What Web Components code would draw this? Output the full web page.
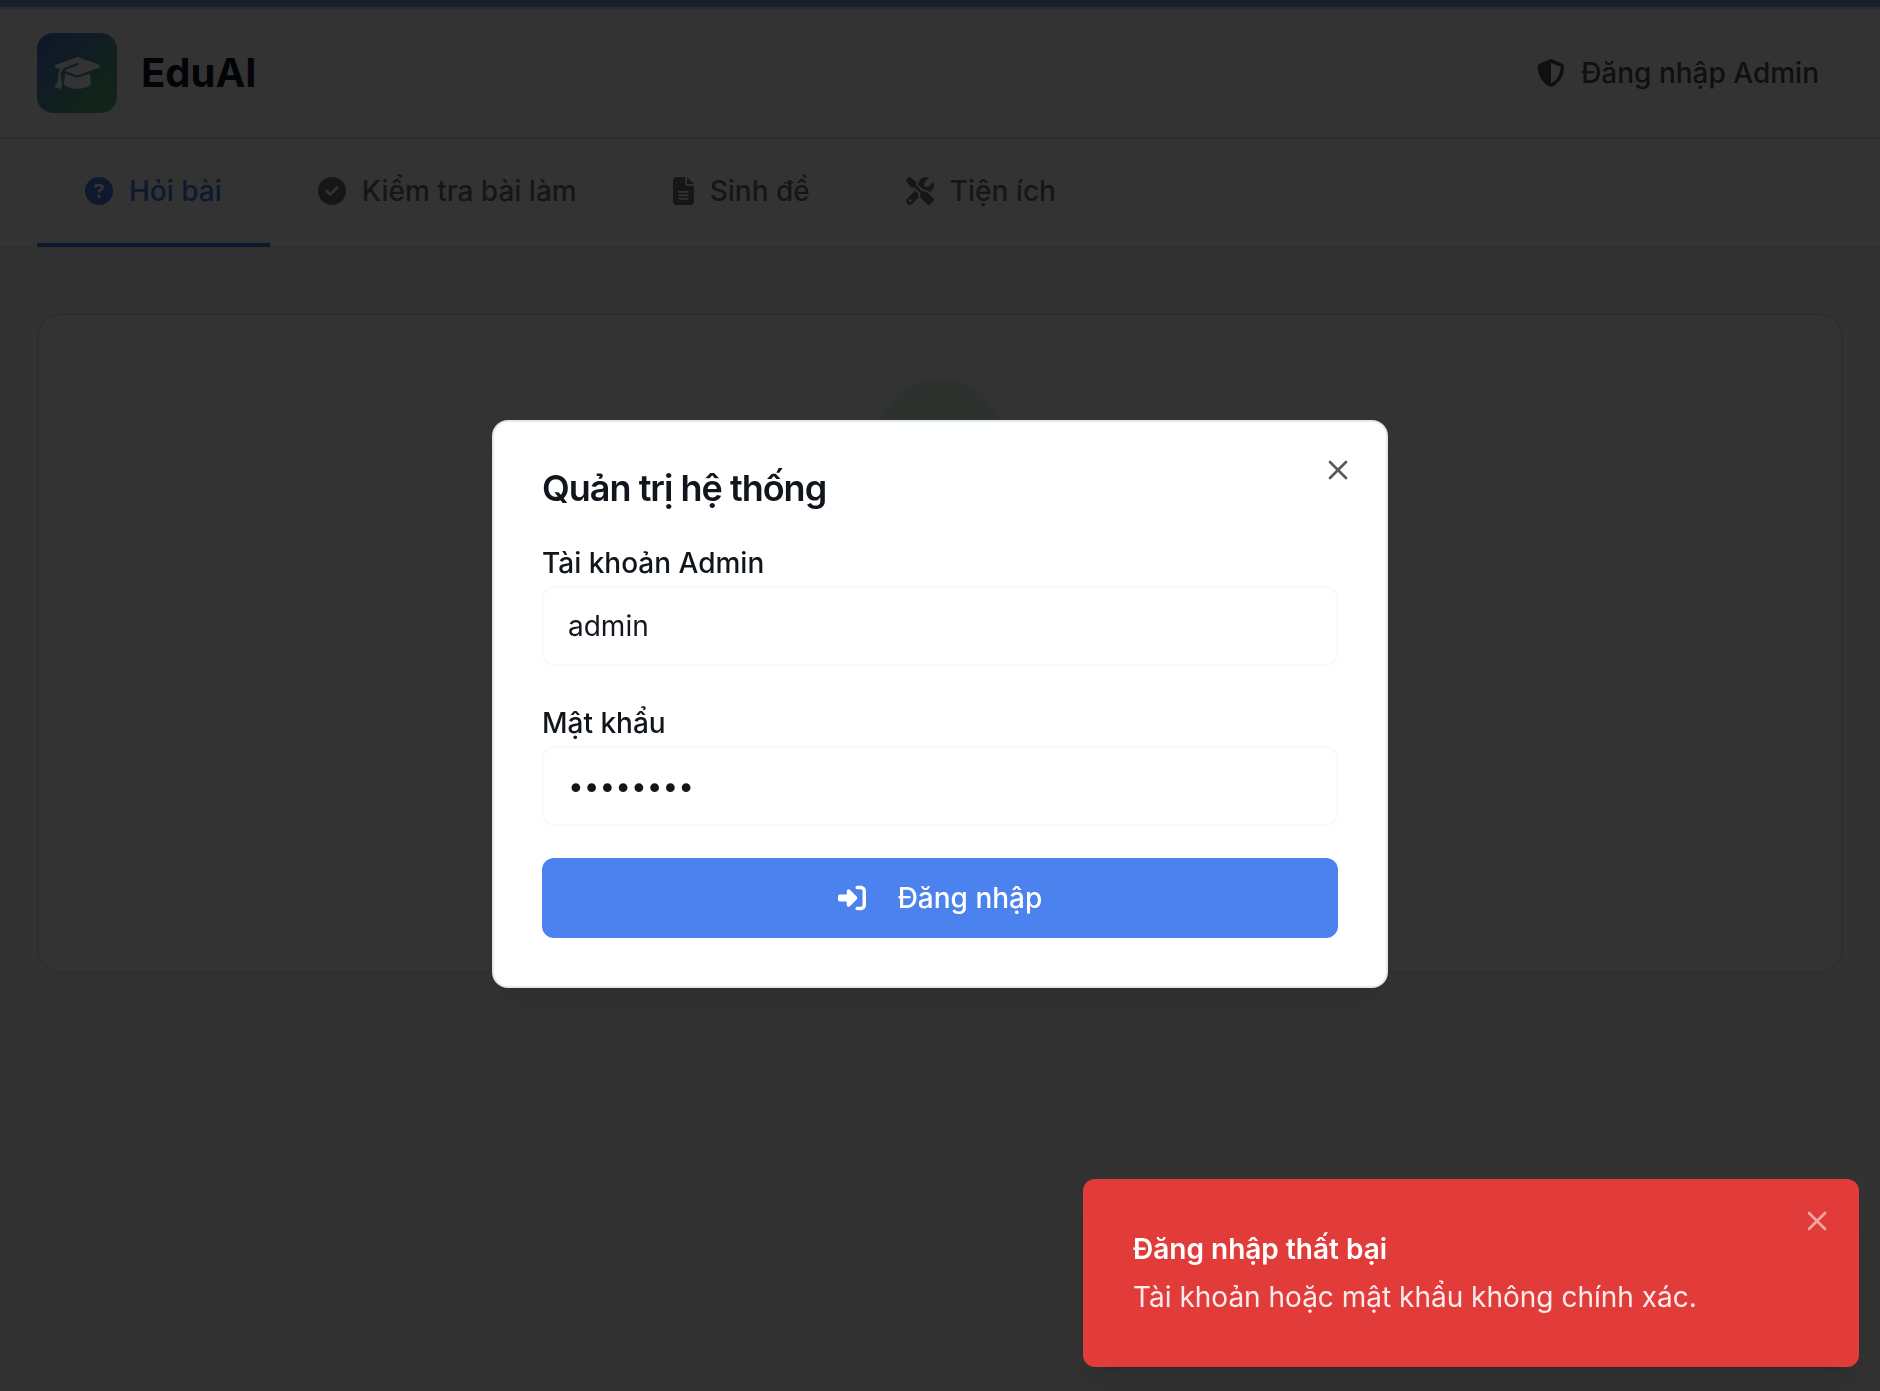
<!DOCTYPE html>
<html lang="vi">
<head>
<meta charset="utf-8">
<meta name="viewport" content="width=device-width, initial-scale=1">
<title>EduAI</title>
<style>
  :root {
    --primary: #4b82ee;
    --accent: #4b7ce6;
    --danger: #e13c3a;
    --ink: #11161c;
    --muted: #6a7077;
    --line: #e5e7ea;
    --gutter: 37px;
  }
  body {
    margin: 0;
    background: #fafafb;
    color: var(--ink);
    font-family: Inter, "Noto Sans", sans-serif;
    font-size: 28px;
    line-height: 40px;
  }
</style>
</head>
<body>
<edu-app></edu-app>

<script>
const ICONS = {
  cap: ['0 0 640 512', 'M320 32c-8.1 0-16.1 1.4-23.7 4.1L15.8 137.4C6.3 140.9 0 149.9 0 160s6.3 19.1 15.8 22.6l57.9 20.9C57.3 229.3 48 259.8 48 291.9v28.1c0 28.4-10.8 57.7-22.3 80.8c-6.5 13-13.9 25.8-22.5 37.6C0 442.7-.9 448.3 .9 453.4s6 8.9 11.2 10.2l64 16c4.2 1.1 8.7 .3 12.4-2s6.3-6.1 7.1-10.4c8.6-42.8 4.3-81.2-2.1-108.7C90.3 344.3 86 329.8 80 316.5V291.9c0-30.2 10.2-58.7 27.9-81.5c12.9-15.5 29.6-28 49.2-35.7l157-61.7c8.2-3.2 17.5 .8 20.7 9s-.8 17.5-9 20.7l-157 61.7c-12.4 4.9-23.3 12.4-32.2 21.6l159.6 57.6c7.6 2.7 15.6 4.1 23.7 4.1s16.1-1.4 23.7-4.1L624.2 182.6c9.5-3.4 15.8-12.5 15.8-22.6s-6.3-19.1-15.8-22.6L343.7 36.1C336.1 33.4 328.1 32 320 32zM128 408c0 35.3 86 72 192 72s192-36.7 192-72L496.7 262.6 354.5 314c-11.1 4-22.8 6-34.5 6s-23.5-2-34.5-6L143.3 262.6 128 408z'],
  question: ['0 0 512 512', 'M256 512A256 256 0 1 0 256 0a256 256 0 1 0 0 512zM169.8 165.3c7.9-22.3 29.1-37.3 52.8-37.3h58.3c34.9 0 63.1 28.3 63.1 63.1c0 22.6-12.1 43.5-31.7 54.8L280 264.4c-.2 13-10.9 23.6-24 23.6c-13.3 0-24-10.7-24-24V250.5c0-8.6 4.6-16.5 12.1-20.8l44.3-25.4c4.7-2.7 7.6-7.7 7.6-13.1c0-8.4-6.8-15.1-15.1-15.1H222.6c-3.4 0-6.4 2.1-7.5 5.3l-.4 1.2c-4.4 12.5-18.2 19-30.6 14.6s-19-18.2-14.6-30.6l.4-1.2zM224 352a32 32 0 1 1 64 0 32 32 0 1 1 -64 0z'],
  check: ['0 0 512 512', 'M256 512A256 256 0 1 0 256 0a256 256 0 1 0 0 512zM369 209L241 337c-9.4 9.4-24.6 9.4-33.9 0l-64-64c-9.4-9.4-9.4-24.6 0-33.9s24.6-9.4 33.9 0l47 47L335 175c9.4-9.4 24.6-9.4 33.9 0s9.4 24.6 0 33.9z'],
  file: ['0 0 384 512', 'M64 0C28.7 0 0 28.7 0 64V448c0 35.3 28.7 64 64 64H320c35.3 0 64-28.7 64-64V160H256c-17.7 0-32-14.3-32-32V0H64zM256 0V128H384L256 0zM112 256H272c8.8 0 16 7.2 16 16s-7.2 16-16 16H112c-8.8 0-16-7.2-16-16s7.2-16 16-16zm0 64H272c8.8 0 16 7.2 16 16s-7.2 16-16 16H112c-8.8 0-16-7.2-16-16s7.2-16 16-16zm0 64H272c8.8 0 16 7.2 16 16s-7.2 16-16 16H112c-8.8 0-16-7.2-16-16s7.2-16 16-16z'],
  tools: ['0 0 512 512', 'M78.6 5C69.1-2.4 55.6-1.5 47 7L7 47c-8.5 8.5-9.4 22-2.1 31.6l80 104c4.5 5.9 11.6 9.4 19 9.4h54.1l109 109c-14.7 29-10 65.4 14.3 89.6l112 112c12.5 12.5 32.8 12.5 45.3 0l64-64c12.5-12.5 12.5-32.8 0-45.3l-112-112c-24.2-24.2-60.6-29-89.6-14.3l-109-109V104c0-7.5-3.5-14.5-9.4-19L78.6 5zM19.9 396.1C7.2 408.8 0 426.1 0 444.1C0 481.6 30.4 512 67.9 512c18 0 35.3-7.2 48-19.9L233.7 374.3c-7.8-20.9-9-43.6-3.6-65.1l-61.7-61.7L19.9 396.1zM512 144c0-10.5-1.1-20.7-3.2-30.5c-2.4-11.2-16.1-14.1-24.2-6l-63.9 63.9c-3 3-7.1 4.7-11.3 4.7H352c-8.8 0-16-7.2-16-16V102.6c0-4.2 1.7-8.3 4.7-11.3l63.9-63.9c8.1-8.1 5.2-21.8-6-24.2C388.7 1.1 378.5 0 368 0C288.5 0 224 64.5 224 144l0 .8 85.3 85.3c36-9.1 75.8 .5 104 28.7L429 274.5c49-23 83-72.8 83-130.5zM56 432a24 24 0 1 1 48 0 24 24 0 1 1 -48 0z'],
  shield: ['0 0 512 512', 'M256 0c4.6 0 9.2 1 13.4 2.9L457.7 82.8c22 9.3 38.4 31 38.3 57.2c-.5 99.2-41.3 280.7-213.6 363.2c-16.7 8-36.1 8-52.8 0C57.3 420.7 16.5 239.2 16 140c-.1-26.2 16.3-47.9 38.3-57.2L242.7 2.9C246.8 1 251.4 0 256 0zm0 66.8V444.8C394 378 431.1 230.1 432 141.4L256 66.8l0 0z'],
  login: ['0 0 512 512', 'M217.9 105.9L340.7 228.7c7.2 7.2 11.3 17.1 11.3 27.3s-4.1 20.1-11.3 27.3L217.9 406.1c-6.4 6.4-15 9.9-24 9.9c-18.7 0-33.9-15.2-33.9-33.9l0-62.1L32 320c-17.7 0-32-14.3-32-32l0-64c0-17.7 14.3-32 32-32l128 0 0-62.1c0-18.7 15.2-33.9 33.9-33.9c9 0 17.6 3.6 24 9.9zM352 416l64 0c17.7 0 32-14.3 32-32l0-256c0-17.7-14.3-32-32-32l-64 0c-17.7 0-32-14.3-32-32s14.3-32 32-32l64 0c53 0 96 43 96 96l0 256c0 53-43 96-96 96l-64 0c-17.7 0-32-14.3-32-32s14.3-32 32-32z'],
  close: ['0 0 24 24', 'M18 6 6 18M6 6l12 12', true],
};

/* Base class: an open shadow root filled from the subclass's markup. */
class EduElement extends HTMLElement {
  connectedCallback() {
    if (this.shadowRoot) return;
    const template = document.createElement('template');
    template.innerHTML = '<style>*{box-sizing:border-box}</style>' + this.markup();
    this.attachShadow({ mode: 'open' }).append(template.content.cloneNode(true));
  }
}

/* <edu-icon name="..."> is as tall as its font size and keeps its own ratio. */
customElements.define('edu-icon', class extends EduElement {
  markup() {
    const [box, path, stroked] = ICONS[this.getAttribute('name')];
    const paint = stroked
      ? 'fill="none" stroke="currentColor" stroke-width="2" stroke-linecap="round" stroke-linejoin="round"'
      : 'fill="currentColor"';
    return `<style>:host{display:inline-flex;flex:none;height:1em} svg{display:block;height:1em;width:auto}</style>
      <svg viewBox="${box}" ${paint} aria-hidden="true"><path d="${path}"/></svg>`;
  }
});

customElements.define('edu-header', class extends EduElement {
  markup() {
    return `<style>
      :host { display: flex; align-items: center; justify-content: space-between;
              padding: 24px var(--gutter); background: #fff; border-bottom: 2px solid var(--line); }
      .brand { display: flex; align-items: center; gap: 24px; }
      .logo { display: grid; place-items: center; width: 80px; height: 80px; border-radius: 16px;
              background: linear-gradient(135deg, #4672dc, #5fbb68);
              color: #fff; font-size: 36px; }
      h1 { margin: 0; font-size: 40px; line-height: 56px; font-weight: 700; color: #0f172a; }
      button { display: flex; align-items: center; gap: 16px; height: 72px; padding: 0 24px; border: 0;
               background: none; color: #4b5058; font: inherit; font-weight: 500; }
    </style>
    <div class="brand"><span class="logo"><edu-icon name="cap"></edu-icon></span><h1>EduAI</h1></div>
    <button type="button"><edu-icon name="shield"></edu-icon>Đăng nhập Admin</button>`;
  }
});

customElements.define('edu-tab', class extends EduElement {
  markup() {
    return `<style>
      :host { display: block; }
      button { display: flex; align-items: center; gap: 16px; height: 108px; padding: 0 48px;
               border: 0; border-bottom: 4px solid transparent; background: none;
               color: var(--muted); font: inherit; font-weight: 500; white-space: nowrap; }
      :host([active]) button { color: var(--accent); border-color: var(--accent); }
    </style>
    <button type="button"><edu-icon name="${this.getAttribute('icon')}"></edu-icon><slot></slot></button>`;
  }
});

customElements.define('edu-tabs', class extends EduElement {
  markup() {
    return `<style>
      :host { display: block; background: #fff; border-bottom: 2px solid var(--line); }
      nav { display: flex; padding: 0 var(--gutter); }
    </style>
    <nav><slot></slot></nav>`;
  }
});

customElements.define('edu-card', class extends EduElement {
  markup() {
    return `<style>
      :host { display: flex; flex-direction: column; align-items: center; min-height: 660px; padding: 64px;
              box-sizing: border-box; background: #fff; border: 2px solid var(--line); border-radius: 24px;
              box-shadow: 0 2px 4px rgba(0, 0, 0, .05); }
      .badge { width: 128px; height: 128px; border-radius: 50%; background: #e4fbea; }
    </style>
    <div class="badge"></div>`;
  }
});

customElements.define('edu-field', class extends EduElement {
  markup() {
    const a = n => this.getAttribute(n) || '';
    return `<style>
      :host { display: flex; flex-direction: column; gap: 6px; }
      label { line-height: 34px; font-weight: 500; }
      input { width: 100%; height: 80px; padding: 0 24px; border: 2px solid #f8f9fa; border-radius: 12px;
              background: #fff; color: inherit; font: inherit; outline: 0; }
    </style>
    <label for="control">${a('label')}</label>
    <input id="control" type="${a('type')}" value="${a('value')}" autocomplete="off">`;
  }
});

customElements.define('edu-login-dialog', class extends EduElement {
  markup() {
    return `<style>
      :host { position: relative; display: block; width: 896px; max-width: 100%; padding: 48px; box-sizing: border-box;
              background: #fff; border: 2px solid #e2e8f0; border-radius: 16px;
              box-shadow: 0 20px 30px -6px rgba(0, 0, 0, .1), 0 8px 12px -8px rgba(0, 0, 0, .1); }
      h2 { margin: 0 0 40px; font-size: 36px; line-height: 36px; font-weight: 600; letter-spacing: -1px; }
      form { display: flex; flex-direction: column; }
      edu-field + edu-field { margin-top: 40px; }
      .submit { display: flex; align-items: center; justify-content: center; gap: 32px; height: 80px; margin-top: 32px;
                border: 0; border-radius: 12px; background: var(--primary); color: #fff; font: inherit; font-weight: 500; }
      .close { position: absolute; top: 32px; right: 32px; display: flex; padding: 0; border: 0; background: none;
               color: inherit; font-size: 32px; opacity: .7; }
    </style>
    <h2>Quản trị hệ thống</h2>
    <form>
      <edu-field label="Tài khoản Admin" type="text" value="admin"></edu-field>
      <edu-field label="Mật khẩu" type="password" value="password"></edu-field>
      <button class="submit" type="button"><edu-icon name="login"></edu-icon>Đăng nhập</button>
    </form>
    <button class="close" type="button" aria-label="Đóng"><edu-icon name="close"></edu-icon></button>`;
  }
});

customElements.define('edu-toast', class extends EduElement {
  markup() {
    return `<style>
      :host { position: fixed; right: 21px; bottom: 24px; z-index: 20; display: flex; flex-direction: column; gap: 8px;
              width: 776px; max-width: calc(100% - 42px); padding: 50px; box-sizing: border-box;
              border-radius: 12px; background: var(--danger); color: #fff;
              box-shadow: 0 20px 30px -6px rgba(0, 0, 0, .1), 0 8px 12px -8px rgba(0, 0, 0, .1); }
      strong { font-weight: 600; }
      .text { opacity: .9; }
      button { position: absolute; top: 26px; right: 26px; display: flex; padding: 0; border: 0; background: none;
               color: #fff; font-size: 32px; opacity: .55; }
    </style>
    <strong><slot name="title"></slot></strong>
    <span class="text"><slot></slot></span>
    <button type="button" aria-label="Đóng"><edu-icon name="close"></edu-icon></button>`;
  }
});

customElements.define('edu-app', class extends EduElement {
  markup() {
    return `<style>
      :host { display: block; min-height: 100vh; }
      .strip { height: 9px; background: #1b1f29; border-bottom: 2px solid #292b37; }
      main { padding: 64px var(--gutter); }
      .overlay { position: fixed; inset: 9px 0 0; z-index: 10; display: flex; align-items: center;
                 justify-content: center; padding-top: 8px; background: rgba(0, 0, 0, .8); }
    </style>
    <div class="strip"></div>
    <edu-header></edu-header>
    <edu-tabs>
      <edu-tab icon="question" active>Hỏi bài</edu-tab>
      <edu-tab icon="check">Kiểm tra bài làm</edu-tab>
      <edu-tab icon="file">Sinh đề</edu-tab>
      <edu-tab icon="tools">Tiện ích</edu-tab>
    </edu-tabs>
    <main><edu-card></edu-card></main>
    <div class="overlay"><edu-login-dialog role="dialog" aria-modal="true" aria-label="Quản trị hệ thống"></edu-login-dialog></div>
    <edu-toast role="alert">
      <span slot="title">Đăng nhập thất bại</span>Tài khoản hoặc mật khẩu không chính xác.
    </edu-toast>`;
  }
});
</script>
</body>
</html>
